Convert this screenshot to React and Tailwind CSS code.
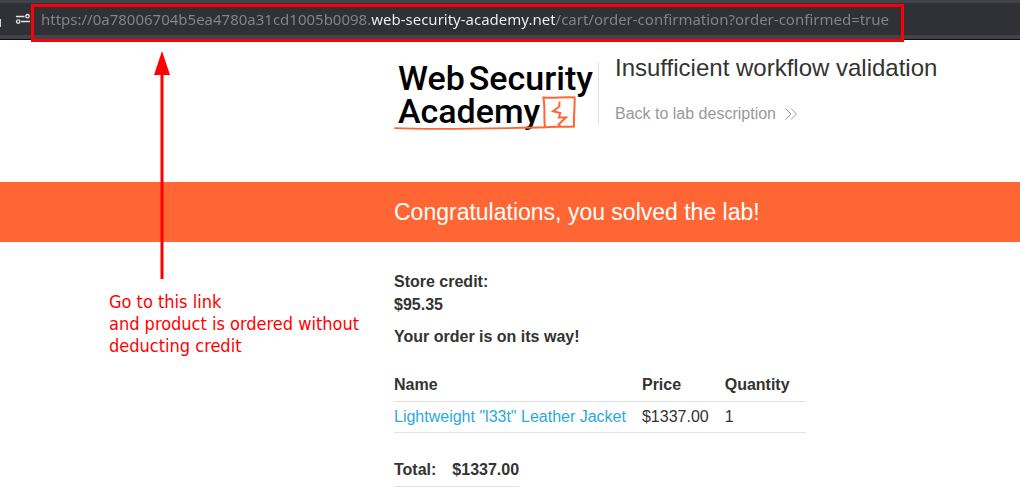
const ADDRESS =
  "https://0a78006704b5ea4780a31cd1005b0098.web-security-academy.net/cart/order-confirmation?order-confirmed=true";

function AddressBar() {
  return (
    <div className="flex h-10 items-center border-t-3 border-b border-t-[#42434a] border-b-[#0e0e12] bg-[#42434a]">
      <div className="flex h-8 w-full items-center self-start bg-[#303136]">
        <span className="mt-2 h-2 w-px bg-[#d8d8da]" />
        <button type="button" aria-label="Site permissions" className="ml-[14px] shrink-0">
          <svg width="16" height="12" viewBox="0 0 16 12" fill="none" stroke="#e4e4e6" strokeWidth="1.3">
            <path d="M1 3.5H9.5M6 8.5H15" />
            <circle cx="12.5" cy="3.2" r="1.7" />
            <circle cx="3.2" cy="8.6" r="1.7" />
          </svg>
        </button>
        <input
          type="text"
          aria-label="Address"
          defaultValue={ADDRESS}
          className="ml-[10px] min-w-0 flex-1 bg-[linear-gradient(90deg,#85868a_330px,#f4f4f6_330px,#f4f4f6_514px,#85868a_514px)] bg-clip-text font-['Noto_Sans',sans-serif] text-[15px] leading-6 text-transparent caret-white outline-none"
        />
      </div>
    </div>
  );
}

function Logo() {
  return (
    <a
      href="#academy"
      className="relative block h-[70px] w-[201px] shrink-0 pl-1 font-['Roboto',sans-serif] text-[34px] leading-[33px] font-medium text-black"
    >
      <span className="flex gap-1">
        <span>Web</span>
        <span>Security</span>
      </span>
      <span className="block">Academy</span>
      <svg className="absolute top-0 left-0" width="201" height="72" viewBox="0 0 201 72" fill="none" stroke="#ff6633">
        <path d="M1 66.2 C40 68 80 67 149 65.4" strokeWidth="1.8" strokeLinecap="round" />
        <path d="M149 65.4 C160 64.2 170 65.3 180 64.6 C179.5 55 181 45 180.6 35.4 C170 34.6 160 36.6 149.4 35.6 C151.4 46 149.6 55 151 65" strokeWidth="2" />
        <path d="M165.5 39.5 L165.3 44.5 L159 49.3 L166.2 51 L165 55.5 L172 55.5 L164.5 62.5 L166.5 64.5" strokeWidth="2" />
      </svg>
    </a>
  );
}

function Annotation() {
  return (
    <>
      <div className="pointer-events-none absolute top-1 left-[31px] h-[38px] w-[873px] border-3 border-[#fb0007]" />
      <svg className="pointer-events-none absolute top-[50px] left-[154px]" width="16" height="230" viewBox="0 0 16 230" fill="#ff0000">
        <path d="M8 1L16 25H0Z" />
        <rect x="6.5" y="24" width="3" height="205" />
      </svg>
      <p className="absolute top-[291px] left-[109px] font-['DejaVu_Sans_Condensed','Noto_Sans',sans-serif] text-[18px] leading-[22px] text-[#ff0000]">
        Go to this link
        <br />
        and product is ordered without
        <br />
        deducting credit
      </p>
    </>
  );
}

export default function App() {
  return (
    <div className="relative min-h-screen bg-white font-['Liberation_Sans',Arial,sans-serif] text-base text-[#333332]">
      <AddressBar />
      <header className="flex pt-[22px] pb-[50px] pl-[394px]">
        <Logo />
        <div className="ml-[3px] h-[62px] border-l border-[#e3e3e3]" />
        <div className="-mt-2 pl-4">
          <h1 className="text-2xl leading-7 whitespace-nowrap">Insufficient workflow validation</h1>
          <a href="#lab" className="mt-5 flex items-center gap-2 leading-6 text-[#999999]">
            Back to lab description
            <svg width="14" height="12" viewBox="0 0 14 12" fill="none" stroke="currentColor">
              <path d="M1.5 .5L7 6L1.5 11.5M7 .5L12.5 6L7 11.5" />
            </svg>
          </a>
        </div>
      </header>
      <section className="bg-[#ff6633] py-4 pl-[394px] text-white">
        <h2 className="text-[23px] leading-7">Congratulations, you solved the lab!</h2>
      </section>
      <main className="pt-7 pb-4 pl-[394px]">
        <p className="leading-[23px] font-bold">
          Store credit:
          <br />
          $95.35
        </p>
        <h4 className="mt-[9px] leading-6 font-bold">Your order is on its way!</h4>
        <table className="mt-5 border-collapse">
          <thead>
            <tr className="h-8 border-b border-[#e3e3e3] text-left">
              <th className="pr-4">Name</th>
              <th className="pr-4">Price</th>
              <th className="pr-4">Quantity</th>
            </tr>
          </thead>
          <tbody>
            <tr className="h-[31px] border-b border-[#e3e3e3]">
              <td className="pr-4">
                <a href="#product" className="text-[#29a9e0]">
                  Lightweight "l33t" Leather Jacket
                </a>
              </td>
              <td className="pr-4">$1337.00</td>
              <td className="pr-4">1</td>
            </tr>
          </tbody>
        </table>
        <table className="mt-[22px] border-collapse">
          <tbody>
            <tr className="h-8 border-b border-[#e3e3e3] text-left">
              <th className="pr-4">Total:</th>
              <th>$1337.00</th>
            </tr>
          </tbody>
        </table>
      </main>
      <Annotation />
    </div>
  );
}
